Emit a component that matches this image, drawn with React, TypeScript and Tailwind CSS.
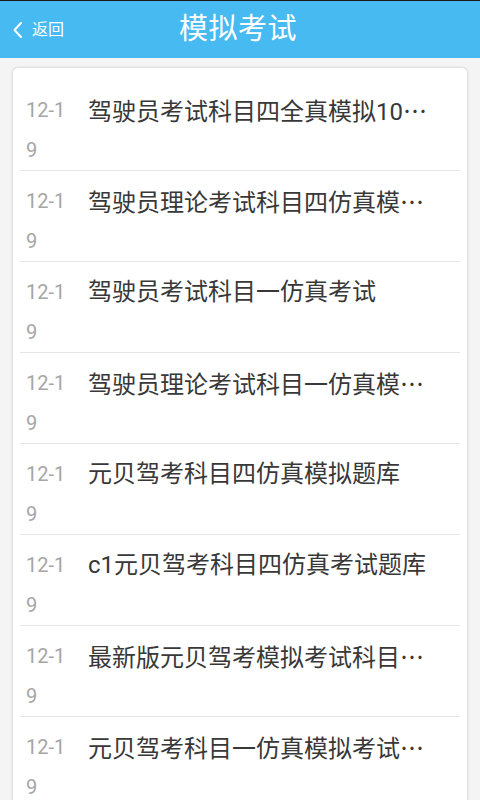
import React from 'react';

// titles as they show in the list (cut to fit, ending in an ellipsis)
const ITEMS = [
    { date: '12-19', title: '驾驶员考试科目四全真模拟10', more: true },
    { date: '12-19', title: '驾驶员理论考试科目四仿真模', more: true },
    { date: '12-19', title: '驾驶员考试科目一仿真考试', more: false },
    { date: '12-19', title: '驾驶员理论考试科目一仿真模', more: true },
    { date: '12-19', title: '元贝驾考科目四仿真模拟题库', more: false },
    { date: '12-19', title: 'c1元贝驾考科目四仿真考试题库', more: false },
    { date: '12-19', title: '最新版元贝驾考模拟考试科目', more: true },
    { date: '12-19', title: '元贝驾考科目一仿真模拟考试', more: true },
];

const App: React.FC = () => {
    return (
        <div
            className="w-[480px] h-[800px] overflow-hidden bg-[#f4f4f4] flex flex-col"
            style={{ fontFamily: 'Roboto, "Noto Sans CJK SC", sans-serif' }}
        >
            <div className="h-[58px] shrink-0 bg-[#47baf2] border-t border-[#1a1a1a] relative flex items-center justify-center">
                <button className="absolute left-[12px] top-0 h-full flex items-center gap-[8px] text-white">
                    <svg width="12" height="18" viewBox="0 0 12 18" fill="none">
                        <path d="M9 2L2.5 9L9 16" stroke="white" strokeWidth="2" strokeLinecap="round" strokeLinejoin="round" />
                    </svg>
                    <span className="text-[16px] leading-none">返回</span>
                </button>
                <h1 className="text-white text-[29px] leading-none tracking-[0.5px] -ml-[4px]">模拟考试</h1>
            </div>

            <div className="mx-[12px] mt-[9px] bg-white rounded-[6px] border border-[#e2e2e2] shadow-[0_0_3px_rgba(0,0,0,0.08)] px-[7px] pt-[12px]">
                {ITEMS.map((item, idx) => (
                    <div key={idx} className="flex border-b border-[#e6e6e6] pt-[10px] pl-[6px] pr-[30px]">
                        <div className="w-[46px] shrink-0 text-[20px] leading-[40px] text-[#a6a6a6] break-all">
                            {item.date}
                        </div>
                        <div className="ml-[16px] flex-1 min-w-0 whitespace-nowrap text-[24px] leading-[40px] text-[#383838]">
                            {item.title}
                            {item.more && (
                                <span style={{ fontFamily: '"Noto Sans CJK SC", sans-serif' }}>…</span>
                            )}
                        </div>
                    </div>
                ))}
            </div>
        </div>
    );
};

export default App;
